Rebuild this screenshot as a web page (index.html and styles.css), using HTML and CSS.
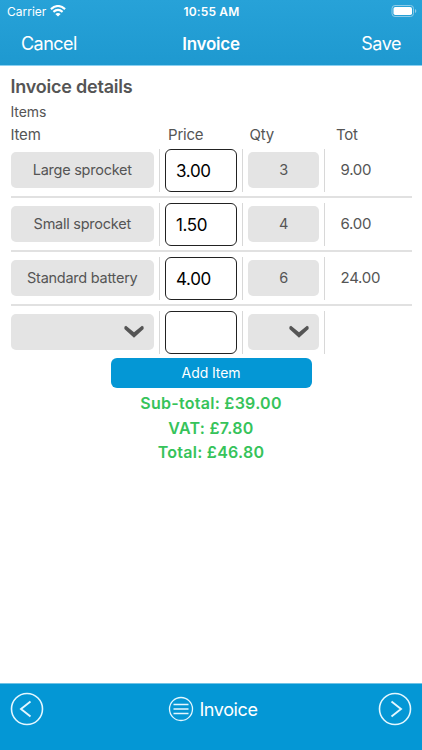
FILE: index.html
```html
<!DOCTYPE html>
<html lang="en">
<head>
<meta charset="utf-8">
<title>Invoice</title>
<link rel="stylesheet" href="styles.css">
</head>
<body>
<header class="header">
  <div class="status">
    <div class="carrier"><span>Carrier</span>
      <svg class="wifi" width="16" height="12" viewBox="0 0 16 12" fill="none" stroke="#fff" stroke-width="2.1"><path d="M.9 4.1Q8-2.1 15.1 4.1M3.4 6.9Q8 2.9 12.6 6.9"/><path d="M8 11.5 5.3 8.9Q8 6.9 10.7 8.9Z" fill="#fff" stroke="none"/></svg>
    </div>
    <span class="time">10:55 AM</span>
    <svg class="battery" width="26" height="12" viewBox="0 0 26 12"><rect x="1" y=".5" width="21.500" height="11" rx="3" fill="none" stroke="#8dcbe8"/><rect x="2.500" y="2" width="18.500" height="8" rx="1.800" fill="#fff"/><path d="M24 4v4q1.300-.6 1.300-2T24 4" fill="#8dcbe8"/></svg>
  </div>
  <nav class="nav"><span class="cancel">Cancel</span><span class="title">Invoice</span><span class="save">Save</span></nav>
</header>
<main class="main">
  <h1 class="heading">Invoice details</h1>
  <p class="subheading">Items</p>
  <div class="columns"><span>Item</span><span>Price</span><span>Qty</span><span>Tot</span></div>
  <div class="row"><div class="pill">Large sprocket</div><i class="rule"></i><div class="price">3.00</div><i class="rule"></i><div class="pill qty">3</div><i class="rule"></i><div class="total">9.00</div></div>
  <div class="row"><div class="pill">Small sprocket</div><i class="rule"></i><div class="price">1.50</div><i class="rule"></i><div class="pill qty">4</div><i class="rule"></i><div class="total">6.00</div></div>
  <div class="row"><div class="pill">Standard battery</div><i class="rule"></i><div class="price">4.00</div><i class="rule"></i><div class="pill qty">6</div><i class="rule"></i><div class="total">24.00</div></div>
  <div class="row last"><div class="pill select"><svg width="22" height="14" viewBox="0 0 22 14"><path d="M1.400 1.700 3 .7 11 7.300 19 .7 20.600 1.700V4L11 12.700 1.400 4Z" fill="#555"/></svg></div><i class="rule"></i><div class="price"></div><i class="rule"></i><div class="pill qty select"><svg width="22" height="14" viewBox="0 0 22 14"><path d="M1.400 1.700 3 .7 11 7.300 19 .7 20.600 1.700V4L11 12.700 1.400 4Z" fill="#555"/></svg></div><i class="rule"></i></div>
  <div class="add">Add Item</div>
  <div class="sums"><div>Sub-total: £39.00</div><div>VAT: £7.80</div><div>Total: £46.80</div></div>
</main>
<footer class="footer">
  <svg width="34" height="34" viewBox="0 0 34 34" fill="none" stroke="#e4f7ff" stroke-width="1.6"><circle cx="17" cy="17" r="15.5"/><path d="M20.500 9.500 11 17l9.500 7.500" stroke-width="1.900"/></svg>
  <div class="menu"><svg width="26" height="26" viewBox="0 0 26 26" fill="none" stroke="#e4f7ff" stroke-width="1.300"><circle cx="13" cy="13" r="11.500"/><path d="M5.500 8.500h15M5.500 13h15M5.500 17.500h15" stroke-width="1.700"/></svg><span>Invoice</span></div>
  <svg width="34" height="34" viewBox="0 0 34 34" fill="none" stroke="#e4f7ff" stroke-width="1.600"><circle cx="17" cy="17" r="15.500"/><path d="M13.500 9.500 23 17l-9.500 7.500" stroke-width="1.900"/></svg>
</footer>
</body>
</html>
```
FILE: styles.css
```css
* { box-sizing: border-box; }
body {
  margin: 0;
  height: 750px;
  display: flex;
  flex-direction: column;
  background: #fff;
  color: #555;
  font-family: Inter, sans-serif;
  overflow: hidden;
}
.header {
  height: 66px;
  flex: none;
  color: #fff;
  background: linear-gradient(#27a2d8, #1e99d0);
  border-bottom: 1px solid #8bd0f1;
}
.status {
  height: 22px;
  display: grid;
  grid-template-columns: 1fr auto 1fr;
  align-items: center;
  padding: 0 5px 0 7px;
  font-size: 12px;
}
.carrier { display: flex; align-items: center; gap: 4px; }
.wifi { margin-top: -1px; }
.time { font-weight: 600; letter-spacing: 0.15px; margin-left: -1px; }
.battery { justify-self: end; margin-top: -1px; }
.nav {
  height: 43px;
  display: grid;
  grid-template-columns: 1fr auto 1fr;
  align-items: center;
  padding: 0 21px;
  font-size: 18px;
  letter-spacing: -0.55px;
}
.title { font-size: 17px; font-weight: 600; letter-spacing: -0.25px; }
.save { text-align: right; letter-spacing: -0.45px; }
.main { flex: 1; padding: 8px 10.5px 0; }
.heading { margin: 0; font-size: 18px; line-height: 26px; font-weight: 600; letter-spacing: -0.22px; }
.subheading { margin: 0; font-size: 14px; line-height: 24px; letter-spacing: -0.1px; }
.columns {
  display: grid;
  grid-template-columns: 157.5px 81.5px 86.5px 1fr;
  height: 20px;
  line-height: 21px;
  font-size: 15px;
  letter-spacing: -0.2px;
}
.row {
  height: 54px;
  display: flex;
  align-items: center;
  border-bottom: 2px solid #e1e1e1;
}
.last { border-bottom-color: transparent; }
.pill {
  width: 143.5px;
  height: 36px;
  flex: none;
  display: flex;
  align-items: center;
  justify-content: center;
  border-radius: 5px;
  background: #e4e4e4;
  font-size: 14.5px;
  line-height: 18px;
  padding-bottom: 1px;
  letter-spacing: -0.25px;
}
.qty { width: 71px; }
.rule { width: 1px; height: 43px; margin: 0 5px; background: #d8d8d8; flex: none; }
.price {
  width: 72px;
  height: 43px;
  flex: none;
  border: 1px solid #222;
  border-radius: 6px;
  padding-left: 10px;
  line-height: 42px;
  font-size: 17px;
  letter-spacing: -0.35px;
  color: #000;
}
.total { padding: 0 0 1px 10.5px; font-size: 15px; line-height: 18px; letter-spacing: -0.25px; }
.select { justify-content: flex-end; padding: 0 9px 0 0; }
.add {
  width: 201px;
  height: 30px;
  margin: -2px auto 0;
  border-radius: 6px;
  background: #0497d5;
  color: #fff;
  font-size: 14px;
  line-height: 30px;
  letter-spacing: -0.1px;
  text-align: center;
}
.sums {
  padding-top: 3px;
  text-align: center;
  color: #36c35a;
  font-size: 16px;
  letter-spacing: 0.27px;
  line-height: 24.5px;
  font-weight: 600;
}
.footer {
  height: 67px;
  flex: none;
  display: flex;
  justify-content: space-between;
  align-items: flex-start;
  padding: 8px 10px 0;
  background: #0497d5;
  border-top: 1px solid #70c3e6;
  color: #fff;
}
.menu { display: flex; align-items: center; gap: 5px; height: 34px; margin-left: 4px; font-size: 18px; letter-spacing: -0.4px; }
```
